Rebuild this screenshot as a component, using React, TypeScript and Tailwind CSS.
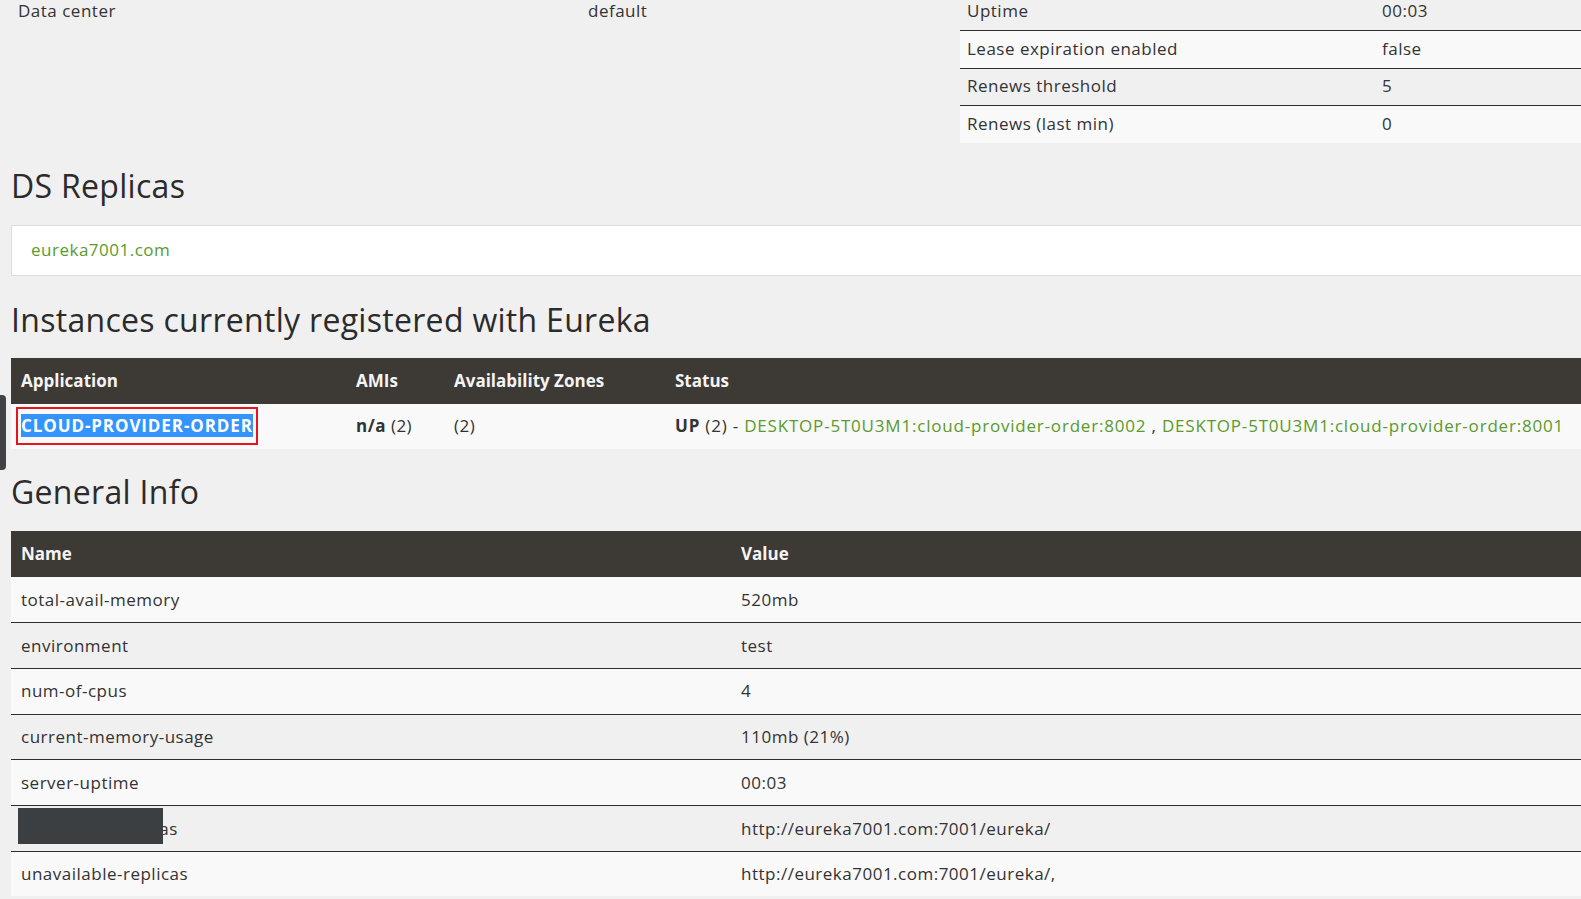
import React from "react";

const body = { fontFamily: '"Open Sans", "Noto Sans", sans-serif' };

function Row({ a, b, light, first }: { a: React.ReactNode; b: React.ReactNode; light: boolean; first?: boolean }) {
  return (
    <div className={`flex h-[45.7px] items-center ${light ? "bg-[#f9f9f9]" : "bg-[#f0f0f0]"} ${first ? "" : "border-t border-[#2e2e2e]"}`}>
      <div className="w-[720px] shrink-0 pl-[10px]">{a}</div>
      <div className="pl-[10px]">{b}</div>
    </div>
  );
}

export default function App() {
  const general: [React.ReactNode, string][] = [
    ["total-avail-memory", "520mb"],
    ["environment", "test"],
    ["num-of-cpus", "4"],
    ["current-memory-usage", "110mb (21%)"],
    ["server-uptime", "00:03"],
    [
      <span className="relative">
        registered-replicas
        <span className="absolute left-[-3px] top-[-9px] h-[36px] w-[145px] bg-[#3c3f42]" />
      </span>,
      "http://eureka7001.com:7001/eureka/",
    ],
    ["unavailable-replicas", "http://eureka7001.com:7001/eureka/,"],
  ];
  return (
    <div className="relative h-[899px] w-[1581px] overflow-hidden bg-[#f0f0f0] text-[17px] tracking-[0.5px] text-[#333]" style={body}>
      <div className="w-[1920px] pl-[11px]">
        {/* top status tables */}
        <div className="-mt-[7.5px] flex gap-[12px]">
          <div className="w-[929px]">
            <div className="flex h-[37.5px] items-center bg-[#f0f0f0] pb-[2px]">
              <div className="w-[577px] shrink-0 pl-[7px]">Data center</div>
              <div>default</div>
            </div>
          </div>
          <div className="ml-[8px] w-[960px]">
            {[
              ["Uptime", "00:03"],
              ["Lease expiration enabled", "false"],
              ["Renews threshold", "5"],
              ["Renews (last min)", "0"],
            ].map(([k, v], i) => (
              <div
                key={k}
                className={`flex h-[37.5px] items-center pb-[2px] ${i % 2 ? "bg-[#f9f9f9]" : "bg-[#f0f0f0]"} ${i ? "border-t border-[#2e2e2e]" : ""}`}
              >
                <div className="w-[422px] shrink-0 pl-[7px]">{k}</div>
                <div>{v}</div>
              </div>
            ))}
          </div>
        </div>

        <h2 className="mt-[23px] text-[32px] leading-[40px] tracking-[0.3px] text-[#2b2b2b]">DS Replicas</h2>
        <div className="mt-[19px] flex h-[51px] items-center border border-[#dddddd] bg-white pl-[19px] text-[#5b9a2c]">
          eureka7001.com
        </div>

        <h2 className="mt-[24px] text-[32px] leading-[40px] tracking-[0.3px] text-[#2b2b2b]">Instances currently registered with Eureka</h2>
        <div className="mt-[18px]">
          <div className="flex h-[46px] items-center bg-[#3d3935] font-bold tracking-[0px] text-[#f4f4f4]">
            <div className="w-[335px] shrink-0 pl-[10px]">Application</div>
            <div className="w-[98px] shrink-0 pl-[10px]">AMIs</div>
            <div className="w-[221px] shrink-0 pl-[10px]">Availability Zones</div>
            <div className="pl-[10px]">Status</div>
          </div>
          <div className="flex h-[45px] items-center bg-[#f9f9f9]">
            <div className="w-[335px] shrink-0 pl-[5px]">
              <span className="inline-block border-2 border-[#e8141b] px-[3px] py-[6px] leading-[22px]">
                <span className="bg-[#3394fd] font-bold tracking-[0.9px] text-white">CLOUD-PROVIDER-ORDER</span>
              </span>
            </div>
            <div className="w-[98px] shrink-0 pl-[10px]">
              <b>n/a</b> (2)
            </div>
            <div className="w-[221px] shrink-0 pl-[10px]">(2)</div>
            <div className="whitespace-nowrap pl-[10px] tracking-[0.8px]">
              <b>UP</b> (2) -{" "}
              <span className="text-[#5b9a2c]">DESKTOP-5T0U3M1:cloud-provider-order:8002</span> ,{" "}
              <span className="text-[#5b9a2c]">DESKTOP-5T0U3M1:cloud-provider-order:8001</span>
            </div>
          </div>
        </div>

        <h2 className="mt-[23px] text-[32px] leading-[40px] tracking-[0.3px] text-[#2b2b2b]">General Info</h2>
        <div className="mt-[19px]">
          <div className="flex h-[46px] items-center bg-[#3d3935] font-bold tracking-[0px] text-[#f4f4f4]">
            <div className="w-[720px] shrink-0 pl-[10px]">Name</div>
            <div className="pl-[10px]">Value</div>
          </div>
          {general.map(([k, v], i) => (
            <Row key={i} a={k} b={v} light={i % 2 === 0} first={i === 0} />
          ))}
        </div>
      </div>

      {/* screenshot side tab */}
      <div className="absolute left-[-4px] top-[395px] h-[75px] w-[10px] rounded-[4px] bg-[#3f4247]" />
    </div>
  );
}
